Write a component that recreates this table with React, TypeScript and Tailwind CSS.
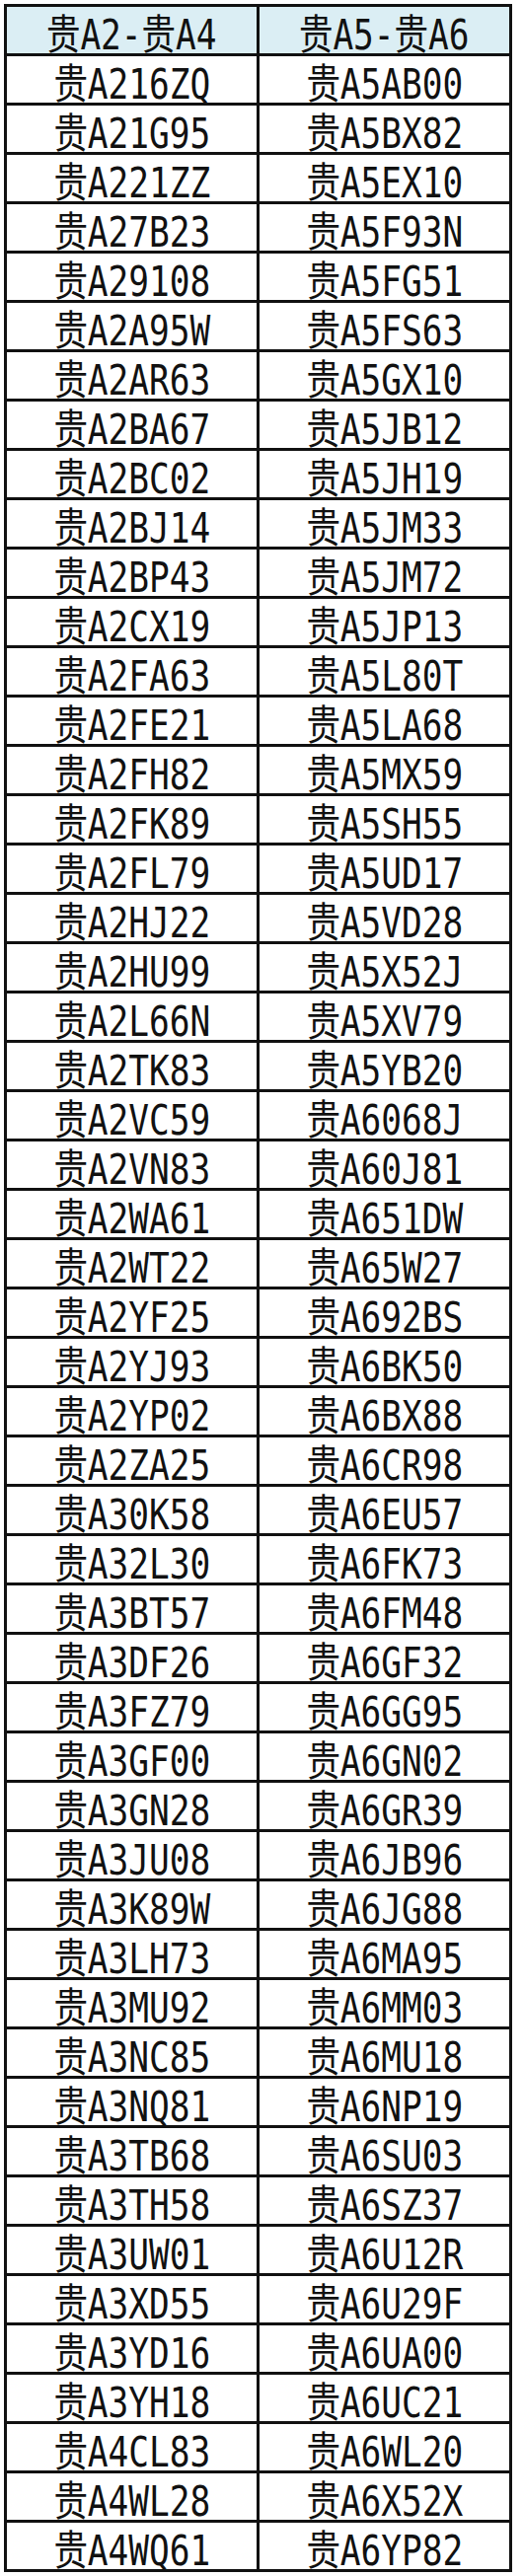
import React from "react";

const rows: [string, string][] = [
  ["贵A216ZQ", "贵A5AB00"],
  ["贵A21G95", "贵A5BX82"],
  ["贵A221ZZ", "贵A5EX10"],
  ["贵A27B23", "贵A5F93N"],
  ["贵A29108", "贵A5FG51"],
  ["贵A2A95W", "贵A5FS63"],
  ["贵A2AR63", "贵A5GX10"],
  ["贵A2BA67", "贵A5JB12"],
  ["贵A2BC02", "贵A5JH19"],
  ["贵A2BJ14", "贵A5JM33"],
  ["贵A2BP43", "贵A5JM72"],
  ["贵A2CX19", "贵A5JP13"],
  ["贵A2FA63", "贵A5L80T"],
  ["贵A2FE21", "贵A5LA68"],
  ["贵A2FH82", "贵A5MX59"],
  ["贵A2FK89", "贵A5SH55"],
  ["贵A2FL79", "贵A5UD17"],
  ["贵A2HJ22", "贵A5VD28"],
  ["贵A2HU99", "贵A5X52J"],
  ["贵A2L66N", "贵A5XV79"],
  ["贵A2TK83", "贵A5YB20"],
  ["贵A2VC59", "贵A6068J"],
  ["贵A2VN83", "贵A60J81"],
  ["贵A2WA61", "贵A651DW"],
  ["贵A2WT22", "贵A65W27"],
  ["贵A2YF25", "贵A692BS"],
  ["贵A2YJ93", "贵A6BK50"],
  ["贵A2YP02", "贵A6BX88"],
  ["贵A2ZA25", "贵A6CR98"],
  ["贵A30K58", "贵A6EU57"],
  ["贵A32L30", "贵A6FK73"],
  ["贵A3BT57", "贵A6FM48"],
  ["贵A3DF26", "贵A6GF32"],
  ["贵A3FZ79", "贵A6GG95"],
  ["贵A3GF00", "贵A6GN02"],
  ["贵A3GN28", "贵A6GR39"],
  ["贵A3JU08", "贵A6JB96"],
  ["贵A3K89W", "贵A6JG88"],
  ["贵A3LH73", "贵A6MA95"],
  ["贵A3MU92", "贵A6MM03"],
  ["贵A3NC85", "贵A6MU18"],
  ["贵A3NQ81", "贵A6NP19"],
  ["贵A3TB68", "贵A6SU03"],
  ["贵A3TH58", "贵A6SZ37"],
  ["贵A3UW01", "贵A6U12R"],
  ["贵A3XD55", "贵A6U29F"],
  ["贵A3YD16", "贵A6UA00"],
  ["贵A3YH18", "贵A6UC21"],
  ["贵A4CL83", "贵A6WL20"],
  ["贵A4WL28", "贵A6X52X"],
  ["贵A4WQ61", "贵A6YP82"],
];

function Cell({ text, header }: { text: string; header?: boolean }) {
  return (
    <div
      className={`flex h-[47px] justify-center pt-[10px] ${
        header ? "bg-[#dbeef4]" : "bg-white"
      }`}
    >
      <span className="inline-block scale-x-[0.82] whitespace-nowrap font-['DejaVu_Sans_Mono','Noto_Sans_CJK_SC',monospace] text-[42px] leading-[37px] text-[#111]">
        {text}
      </span>
    </div>
  );
}

export default function App() {
  return (
    <div className="min-h-[2611px] bg-white pl-[4px] pt-[4px]">
      <div className="grid w-[515px] grid-cols-2 gap-[3px] border-[3px] border-[#111] bg-[#111]">
        <Cell text="贵A2-贵A4" header />
        <Cell text="贵A5-贵A6" header />
        {rows.map(([a, b], i) => (
          <React.Fragment key={i}>
            <Cell text={a} />
            <Cell text={b} />
          </React.Fragment>
        ))}
      </div>
    </div>
  );
}
